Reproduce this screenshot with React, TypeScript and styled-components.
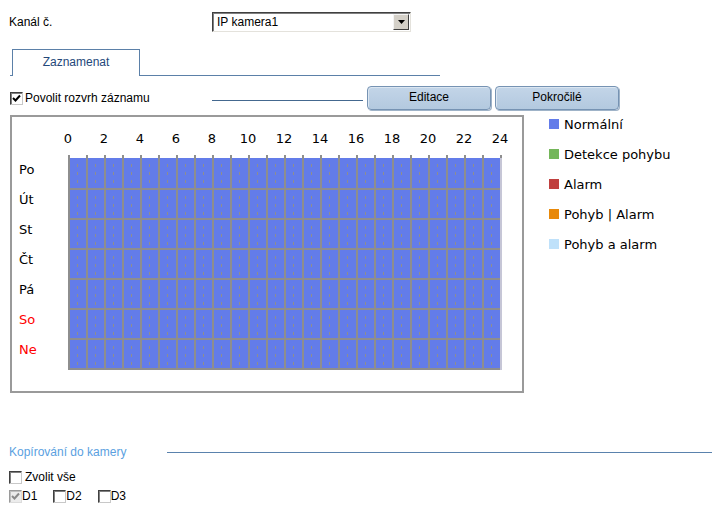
import styled, { createGlobalStyle } from 'styled-components'

const GlobalStyle = createGlobalStyle`
  html, body {
    margin: 0;
    padding: 0;
    background: #fff;
  }
  body {
    font-family: 'Liberation Sans', Arial, sans-serif;
    font-size: 12px;
    color: #000;
    overflow: hidden;
  }
`

const BLUE = '#637ce9'
const GRID_LINE = '#8e8e8e'
const DASH = `linear-gradient(${GRID_LINE}, ${GRID_LINE})`

const days = [
  { name: 'Po', weekend: false },
  { name: 'Út', weekend: false },
  { name: 'St', weekend: false },
  { name: 'Čt', weekend: false },
  { name: 'Pá', weekend: false },
  { name: 'So', weekend: true },
  { name: 'Ne', weekend: true },
]

const hourLabels = Array.from({ length: 13 }, (_, i) => i * 2)
const hours = Array.from({ length: 24 }, (_, i) => i)

const legend = [
  { label: 'Normální', color: BLUE },
  { label: 'Detekce pohybu', color: '#74b65a' },
  { label: 'Alarm', color: '#c0403f' },
  { label: 'Pohyb | Alarm', color: '#e8890a' },
  { label: 'Pohyb a alarm', color: '#bfe1fa' },
]

const Page = styled.div`
  width: 717px;
  height: 510px;
  padding-top: 12px;
  box-sizing: border-box;
`

const ChannelRow = styled.div`
  display: flex;
  align-items: center;
  padding-left: 9px;
  height: 20px;
`

const FieldLabel = styled.span`
  width: 203px;
`

const Select = styled.div`
  width: 199px;
  height: 20px;
  box-sizing: border-box;
  border: 1px solid;
  border-color: #404040 #e4e2dc #e4e2dc #404040;
  box-shadow: inset 1px 1px 0 #808080;
  display: flex;
  align-items: center;
  justify-content: space-between;
  padding: 0 1px 0 4px;
  background: #fff;
`

const SelectButton = styled.span`
  width: 16px;
  height: 16px;
  box-sizing: border-box;
  background: #d4d0c8;
  border: 1px solid;
  border-color: #f4f4f4 #404040 #404040 #f4f4f4;
  display: flex;
  align-items: center;
  justify-content: center;
`

const TabBar = styled.div`
  margin: 17px 0 0 10px;
  width: 428px;
  height: 26px;
  border-bottom: 1px solid #5b80a8;
  display: flex;
  align-items: flex-end;
  padding-left: 2px;
`

const Tab = styled.div`
  width: 128px;
  height: 27px;
  margin-bottom: -1px;
  box-sizing: border-box;
  border: 1px solid #5b80a8;
  border-bottom: none;
  background: #fff;
  display: flex;
  align-items: center;
  justify-content: center;
  padding-bottom: 2px;
  color: #24487a;
`

const Toolbar = styled.div`
  display: flex;
  align-items: center;
  height: 24px;
  margin-top: 10px;
  padding-left: 10px;
`

const EnableGroup = styled.label`
  width: 202px;
  display: flex;
  align-items: center;
  gap: 2px;
`

const Rule = styled.span`
  width: 151px;
  height: 1px;
  margin-top: 5px;
  background: #44688f;
`

const ActionButton = styled.button`
  width: 124px;
  height: 24px;
  margin-left: 4px;
  font-family: 'Liberation Sans', Arial, sans-serif;
  font-size: 12px;
  color: #000;
  border: 1px solid #7693b3;
  border-radius: 4px;
  background: linear-gradient(#c3d5e8, #b3c9df);
  box-shadow: inset 1px 1px 0 #dbe6f1, 1px 1px 0 #9fb3c8;
  padding: 0 0 2px;
`

const ScheduleArea = styled.div`
  display: flex;
  align-items: flex-start;
  margin-top: 5px;
  padding-left: 10px;
`

const ScheduleBox = styled.div`
  width: 514px;
  height: 278px;
  box-sizing: border-box;
  border: 2px solid #9a9a9a;
  padding-top: 14px;
  font-family: 'DejaVu Sans', Verdana, sans-serif;
  font-size: 13px;
`

const HourRow = styled.div`
  display: flex;
  padding-left: 38px;
  height: 16px;
  line-height: 16px;
`

const HourLabel = styled.span`
  width: 36px;
  text-align: center;
`

const Ticks = styled.div`
  margin: 8px 0 0 56px;
  width: 434px;
  height: 3px;
  background: repeating-linear-gradient(to right, ${GRID_LINE} 0 2px, transparent 2px 18px);
`

const ScheduleBody = styled.div`
  display: flex;
`

const DayColumn = styled.div`
  width: 56px;
  padding-left: 7px;
  box-sizing: border-box;
`

const DayLabel = styled.div<{ $weekend: boolean }>`
  height: 30px;
  padding-top: 4px;
  box-sizing: border-box;
  line-height: 16px;
  color: ${({ $weekend }) => ($weekend ? '#ff0000' : '#000')};
`

const Chart = styled.div`
  border-right: 2px solid #c6c6d6;
`

const DayRow = styled.div<{ $first: boolean }>`
  display: flex;
  height: ${({ $first }) => ($first ? 32 : 30)}px;
  box-sizing: border-box;
  border-bottom: 2px solid ${GRID_LINE};
`

/* hour cell with a dashed half-hour mark in the middle */
const Cell = styled.div`
  width: 18px;
  height: 100%;
  box-sizing: border-box;
  border-left: 2px solid ${GRID_LINE};
  background-color: ${BLUE};
  background-image: ${DASH}, ${DASH}, ${DASH};
  background-size: 1px 3px;
  background-position: 7px 6px, 7px 14px, 7px 22px;
  background-repeat: no-repeat;
`

const Legend = styled.ul`
  list-style: none;
  margin: 0 0 0 25px;
  padding: 0;
  display: flex;
  flex-direction: column;
  gap: 12px;
  font-family: 'DejaVu Sans', Verdana, sans-serif;
  font-size: 13px;
`

const LegendItem = styled.li`
  display: flex;
  align-items: center;
  gap: 5px;
  height: 18px;
`

const Swatch = styled.span<{ $color: string }>`
  width: 10px;
  height: 10px;
  background: ${({ $color }) => $color};
`

const CopyHeading = styled.div`
  display: flex;
  align-items: center;
  height: 16px;
  margin-top: 51px;
  padding-left: 9px;
  padding-right: 5px;
`

const CopyTitle = styled.span`
  width: 158px;
  color: #5b9fdf;
`

const CopyRule = styled.span`
  flex: 1;
  height: 1px;
  background: #5a82ad;
`

const OptionRow = styled.div<{ $top: number }>`
  display: flex;
  align-items: center;
  gap: 16px;
  height: 16px;
  margin-top: ${({ $top }) => $top}px;
  padding-left: 9px;
`

const Option = styled.label<{ $gap: number }>`
  display: flex;
  align-items: center;
  gap: ${({ $gap }) => $gap}px;
`

const Box = styled.span<{ $disabled?: boolean }>`
  width: 13px;
  height: 13px;
  box-sizing: border-box;
  border: 1px solid;
  border-color: ${({ $disabled }) => ($disabled ? '#9a9a9a #dcdcdc #dcdcdc #9a9a9a' : '#404040 #c8c8c8 #c8c8c8 #404040')};
  box-shadow: inset 1px 1px 0 ${({ $disabled }) => ($disabled ? '#c0c0c0' : '#808080')};
  background: ${({ $disabled }) => ($disabled ? '#ececec' : '#fff')};
  display: flex;
  align-items: center;
  justify-content: center;
`

const CheckBox = ({ checked = false, disabled = false }: { checked?: boolean; disabled?: boolean }) => (
  <Box $disabled={disabled}>
    {checked && (
      <svg width="9" height="9" viewBox="0 0 9 9">
        <path d="M1 4 L3.5 6.5 L8 1.5" fill="none" stroke={disabled ? '#8a8a8a' : '#000'} strokeWidth="2" />
      </svg>
    )}
  </Box>
)

const App = () => {
  return (
    <Page>
      <GlobalStyle />
      <ChannelRow>
        <FieldLabel>Kanál č.</FieldLabel>
        <Select>
          <span>IP kamera1</span>
          <SelectButton>
            <svg width="7" height="4" viewBox="0 0 7 4">
              <path d="M0 0 H7 L3.5 4 Z" fill="#000" />
            </svg>
          </SelectButton>
        </Select>
      </ChannelRow>

      <TabBar>
        <Tab>Zaznamenat</Tab>
      </TabBar>

      <Toolbar>
        <EnableGroup>
          <CheckBox checked />
          <span>Povolit rozvrh záznamu</span>
        </EnableGroup>
        <Rule />
        <ActionButton>Editace</ActionButton>
        <ActionButton>Pokročilé</ActionButton>
      </Toolbar>

      <ScheduleArea>
        <ScheduleBox>
          <HourRow>
            {hourLabels.map((h) => (
              <HourLabel key={h}>{h}</HourLabel>
            ))}
          </HourRow>
          <Ticks />
          <ScheduleBody>
            <DayColumn>
              {days.map((d) => (
                <DayLabel key={d.name} $weekend={d.weekend}>
                  {d.name}
                </DayLabel>
              ))}
            </DayColumn>
            <Chart>
              {days.map((d, i) => (
                <DayRow key={d.name} $first={i === 0}>
                  {hours.map((h) => (
                    <Cell key={h} />
                  ))}
                </DayRow>
              ))}
            </Chart>
          </ScheduleBody>
        </ScheduleBox>
        <Legend>
          {legend.map((l) => (
            <LegendItem key={l.label}>
              <Swatch $color={l.color} />
              {l.label}
            </LegendItem>
          ))}
        </Legend>
      </ScheduleArea>

      <CopyHeading>
        <CopyTitle>Kopírování do kamery</CopyTitle>
        <CopyRule />
      </CopyHeading>

      <OptionRow $top={9}>
        <Option $gap={3}>
          <CheckBox />
          Zvolit vše
        </Option>
      </OptionRow>
      <OptionRow $top={3}>
        <Option $gap={0}>
          <CheckBox checked disabled />
          D1
        </Option>
        <Option $gap={0}>
          <CheckBox />
          D2
        </Option>
        <Option $gap={0}>
          <CheckBox />
          D3
        </Option>
      </OptionRow>
    </Page>
  )
}

export default App
